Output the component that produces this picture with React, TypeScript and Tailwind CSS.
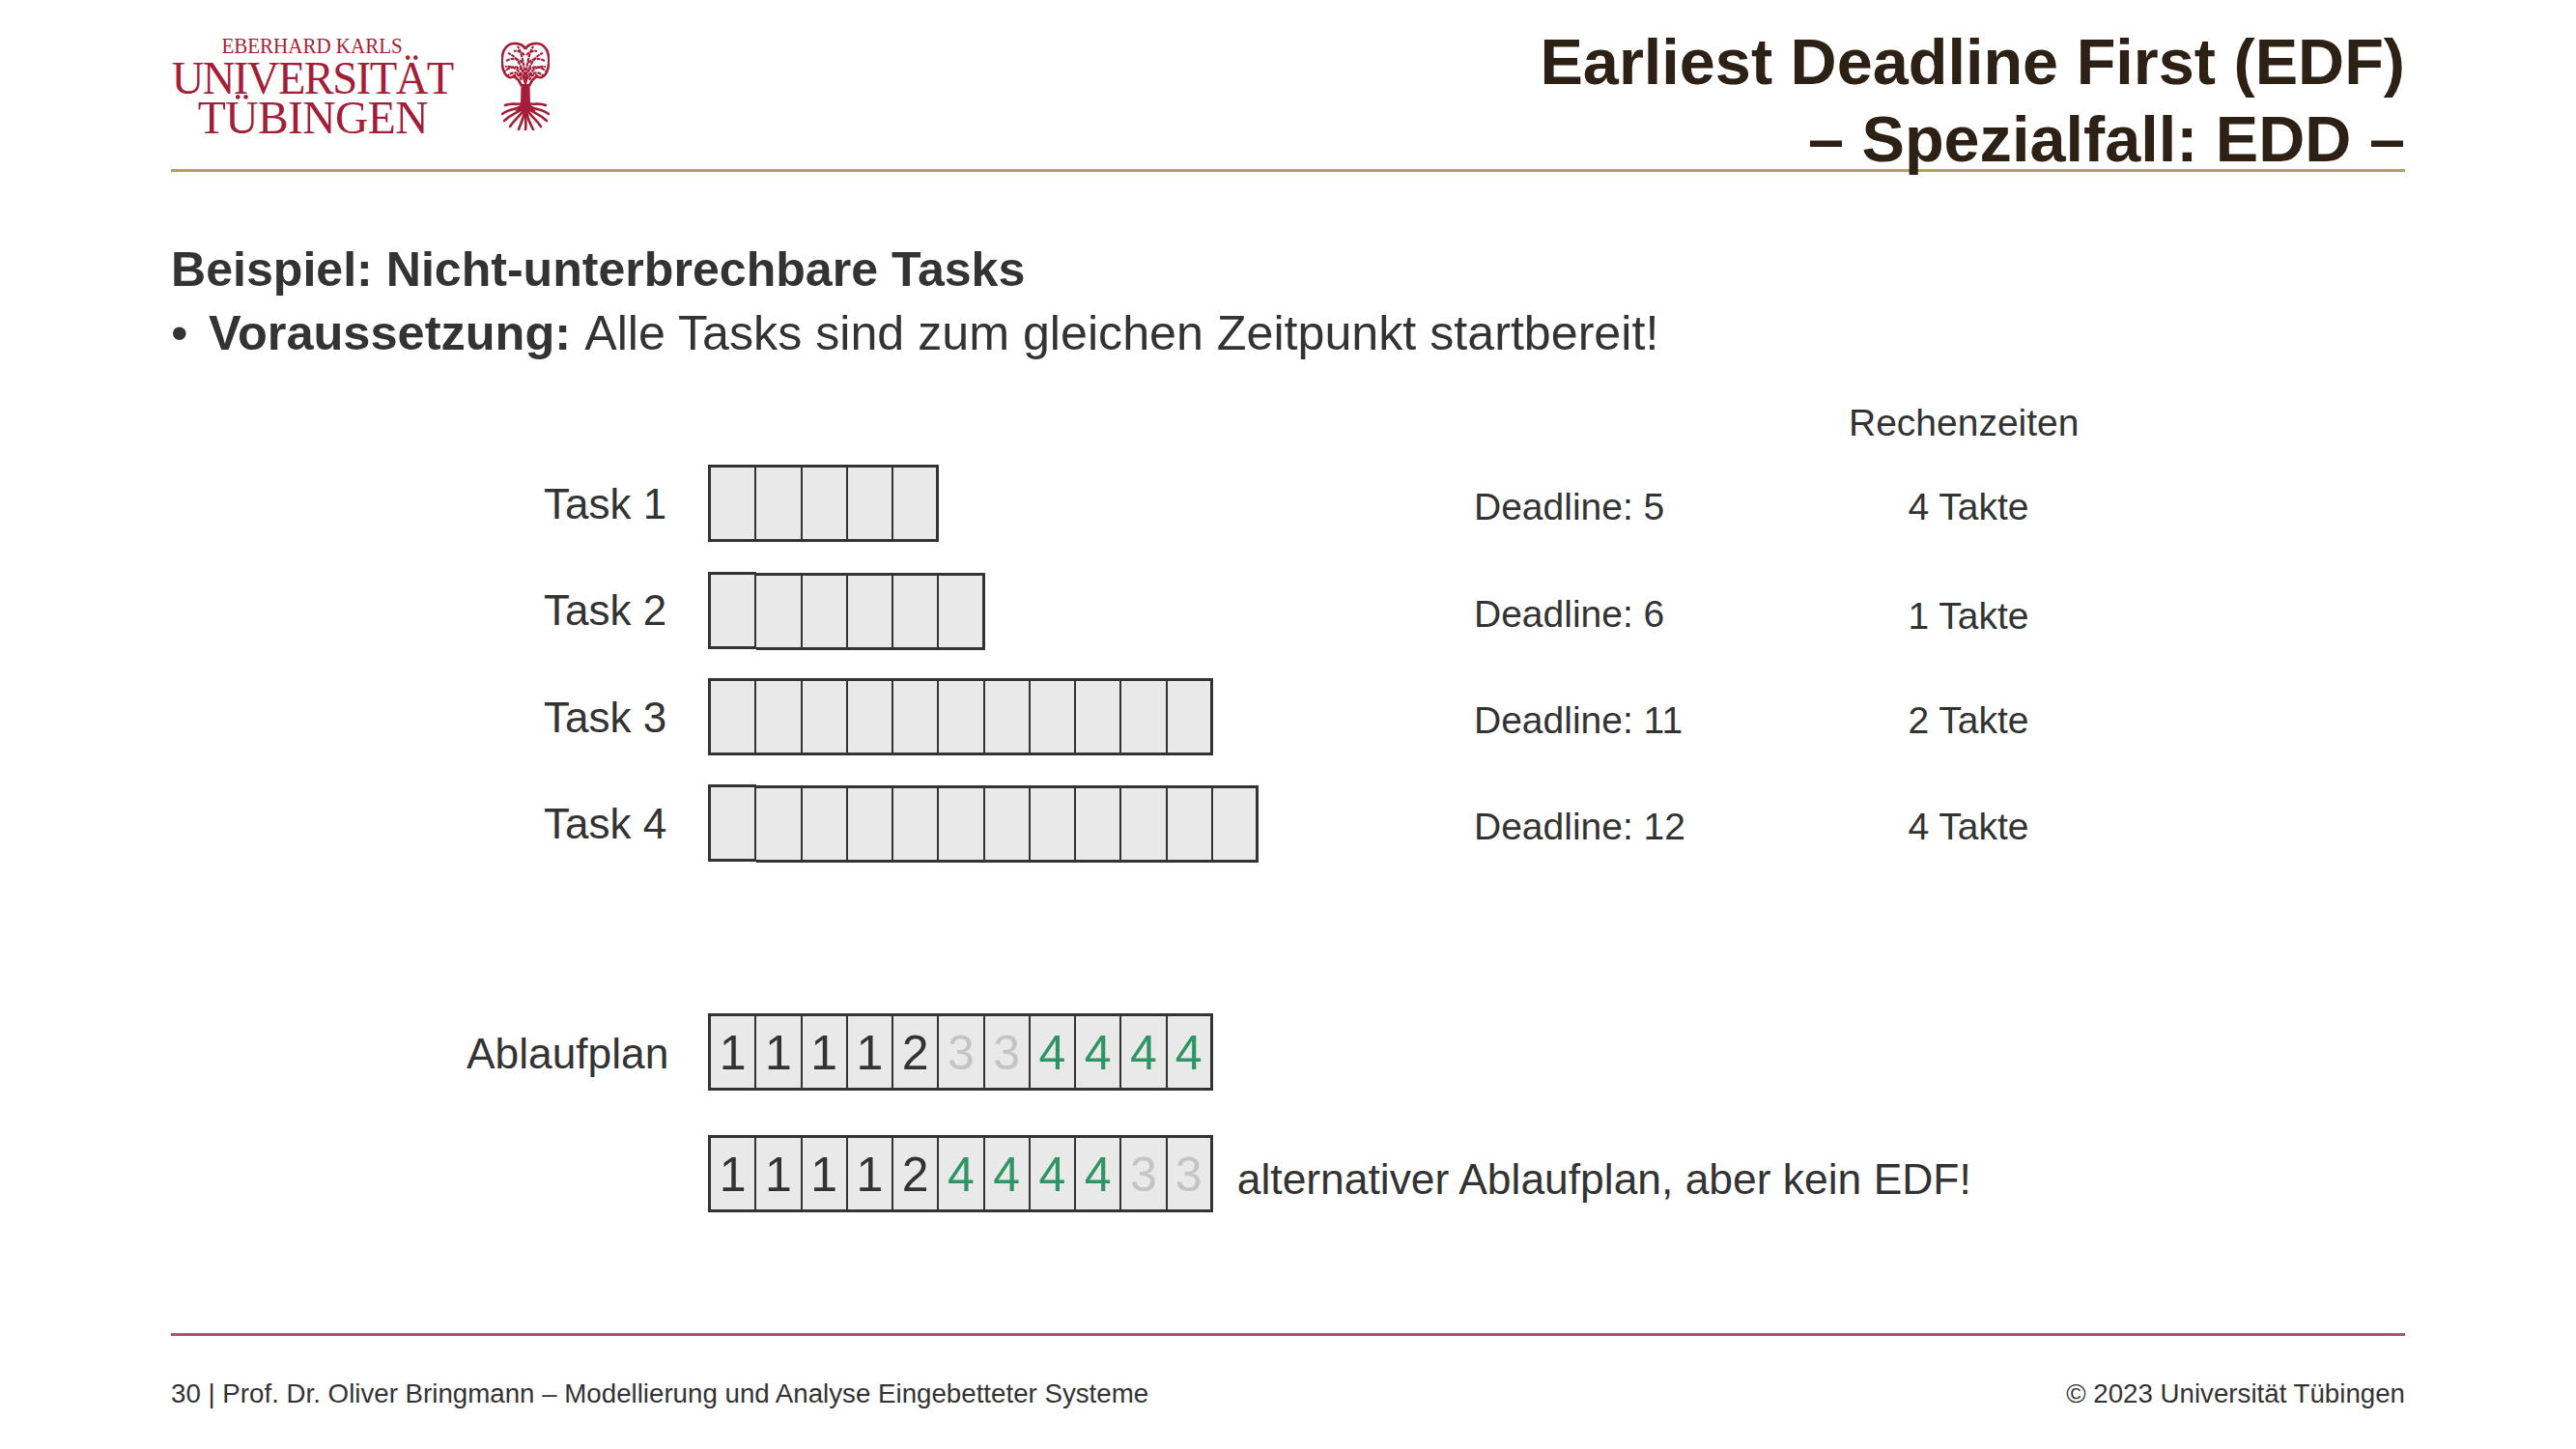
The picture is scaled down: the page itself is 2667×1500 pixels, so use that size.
const sans = "font-['Liberation_Sans',Arial,sans-serif]";

const taskRows = [
  { label: "Task 1", cells: 5, deadline: "Deadline: 5", takte: "4 Takte", dlPad: "pt-[6px]", tkPad: "pt-[6px]" },
  { label: "Task 2", cells: 6, deadline: "Deadline: 6", takte: "1 Takte", dlPad: "pt-[8px]", tkPad: "pt-[12px]" },
  { label: "Task 3", cells: 11, deadline: "Deadline: 11", takte: "2 Takte", dlPad: "pt-[6px]", tkPad: "pt-[6px]" },
  { label: "Task 4", cells: 12, deadline: "Deadline: 12", takte: "4 Takte", dlPad: "pt-[5px]", tkPad: "pt-[5px]" },
];

const planA = ["1", "1", "1", "1", "2", "3", "3", "4", "4", "4", "4"];
const planB = ["1", "1", "1", "1", "2", "4", "4", "4", "4", "3", "3"];

function digitColor(d: string) {
  if (d === "3") return "text-[#c4c4c4]";
  if (d === "4") return "text-[#2f9565]";
  return "text-[#333333]";
}

function Cell({ value, shift = "" }: { value?: string; shift?: string }) {
  return (
    <div
      className={`w-[47.25px] first:w-[50.25px] first:border-l-[3px] last:border-r-[3px] h-20 border-y-[3px] border-r-2 border-[#333333] bg-[#e9e9e9] flex items-center justify-center pt-[2px] text-[50px] leading-none ${shift} ${
        value ? digitColor(value) : ""
      }`}
    >
      {value}
    </div>
  );
}

function Tree() {
  const lace = [
    "M25 44C22 32 15 25 4 26",
    "M25 42C22 28 18 16 7 12",
    "M25 40C24 26 22 14 17 5",
    "M24 14C20 10 16 9 13 10",
    "M22 22C17 17 11 17 5 20",
    "M22 30C17 25 10 25 3 31",
    "M21 36C17 31 11 31 6 36",
    "M12 37C14 33 18 33 21 40",
  ];
  const roots = [
    "M23 64C17 66 10 63 4 66",
    "M22 66C16 71 9 69 1 75",
    "M22 69C16 75 10 75 3 82",
    "M23 71C19 78 14 80 9 88",
    "M24 72C23 80 20 85 18 91",
    "M25 72C25 80 26 86 25 92",
    "M26 72C27 80 30 85 33 91",
    "M27 71C31 78 36 80 41 88",
    "M28 69C34 75 40 75 47 82",
    "M28 66C34 71 41 69 49 75",
    "M27 64C33 66 40 63 46 66",
  ];
  return (
    <svg viewBox="0 0 50 92" className="w-[50px] h-[92px]" fill="none">
      {[false, true].map((mirror) => (
        <g key={String(mirror)} transform={mirror ? "matrix(-1 0 0 1 50 0)" : undefined} stroke="#a51e37">
          <path d="M25 8C22 1 10 0 5 6C0 11 0 22 2 29C4 36 9 39 13 36C17 38 19 41 21 46" strokeWidth="2.6" />
          {lace.map((d) => (
            <path key={d} d={d} strokeWidth="2.1" strokeDasharray="4 0.8" />
          ))}
        </g>
      ))}
      <path d="M20.5 44L29.5 44L30 64C30 68 33 70 36 72L14 72C17 70 20 68 20 64Z" fill="#a51e37" />
      {roots.map((d) => (
        <path key={d} d={d} stroke="#a51e37" strokeWidth="2.6" strokeLinecap="round" />
      ))}
    </svg>
  );
}

function Logo() {
  return (
    <div className="flex items-start pt-[37px]">
      <div className="w-[293px] flex flex-col items-center font-['Liberation_Serif',serif] text-[#a51e37]">
        <div className="text-[24px] leading-[20px] scale-x-[0.875] whitespace-nowrap">EBERHARD KARLS</div>
        <div className="text-[49px] leading-[42px] mt-[3px] tracking-[-1.6px] scale-x-[0.95] whitespace-nowrap">UNIVERSITÄT</div>
        <div className="text-[49px] leading-[42px] tracking-[-0.6px] scale-x-[0.97] -mt-px whitespace-nowrap">TÜBINGEN</div>
      </div>
      <div className="ml-[49px] mt-[6px]">
        <Tree />
      </div>
    </div>
  );
}

export default function App() {
  return (
    <div className={`${sans} w-[2667px] h-[1500px] bg-white text-[#333333] px-[177px] overflow-hidden`}>
      <header className="h-[178px] border-b-[3px] border-[#b0a064] flex justify-between items-start">
        <Logo />
        <div className="pt-[25px] text-right text-[66.6px] leading-[79.5px] font-bold text-[#2d2015]">
          <div>Earliest Deadline First (EDF)</div>
          <div>– Spezialfall: EDD –</div>
        </div>
      </header>

      <section className="pt-[68px] leading-[66px]">
        <div className="font-bold text-[50.1px]">Beispiel: Nicht-unterbrechbare Tasks</div>
        <div className="flex text-[50.2px]">
          <span className="w-[39px]">•</span>
          <span>
            <b className="text-[50.5px]">Voraussetzung:</b>
            <span className="ml-[3px]"> Alle Tasks sind zum gleichen Zeitpunkt startbereit!</span>
          </span>
        </div>
      </section>

      <div className="flex mt-[37px] text-[39px] leading-[46px]">
        <div className="w-[1737px]" />
        <div className="w-[190px] text-center whitespace-nowrap">Rechenzeiten</div>
      </div>

      <div className="mt-[20px] flex flex-col gap-[30.5px]">
        {taskRows.map((row) => (
          <div key={row.label} className="flex items-center h-20">
            <div className="w-[556px] pl-[386px] text-[44px] leading-none pt-px">{row.label}</div>
            <div className="w-[793px] flex">
              {Array.from({ length: row.cells }).map((_, i) => (
                <Cell
                  key={i}
                  shift={
                    row.cells === 6 && i > 0 ? "translate-y-px" : row.cells === 12 && i === 0 ? "-translate-y-px" : ""
                  }
                />
              ))}
            </div>
            <div className={`w-[412px] text-[39px] leading-none ${row.dlPad}`}>{row.deadline}</div>
            <div className={`w-[200px] text-center text-[39px] leading-none ${row.tkPad}`}>{row.takte}</div>
          </div>
        ))}
      </div>

      <div className="mt-[156px] flex items-center h-20">
        <div className="w-[556px] pl-[306px] text-[44.3px] leading-none pt-[5px]">Ablaufplan</div>
        <div className="flex">
          {planA.map((d, i) => (
            <Cell key={i} value={d} />
          ))}
        </div>
      </div>

      <div className="mt-[46px] flex items-center h-20">
        <div className="w-[556px]" />
        <div className="flex">
          {planB.map((d, i) => (
            <Cell key={i} value={d} />
          ))}
        </div>
        <div className="ml-[25px] text-[44.4px] leading-none pt-[14px]">alternativer Ablaufplan, aber kein EDF!</div>
      </div>

      <footer className="mt-[125px] border-t-[3px] border-[#c04a70] pt-[43px] flex justify-between text-[27.7px] leading-[34px]">
        <div>30 | Prof. Dr. Oliver Bringmann – Modellierung und Analyse Eingebetteter Systeme</div>
        <div>© 2023 Universität Tübingen</div>
      </footer>
    </div>
  );
}
